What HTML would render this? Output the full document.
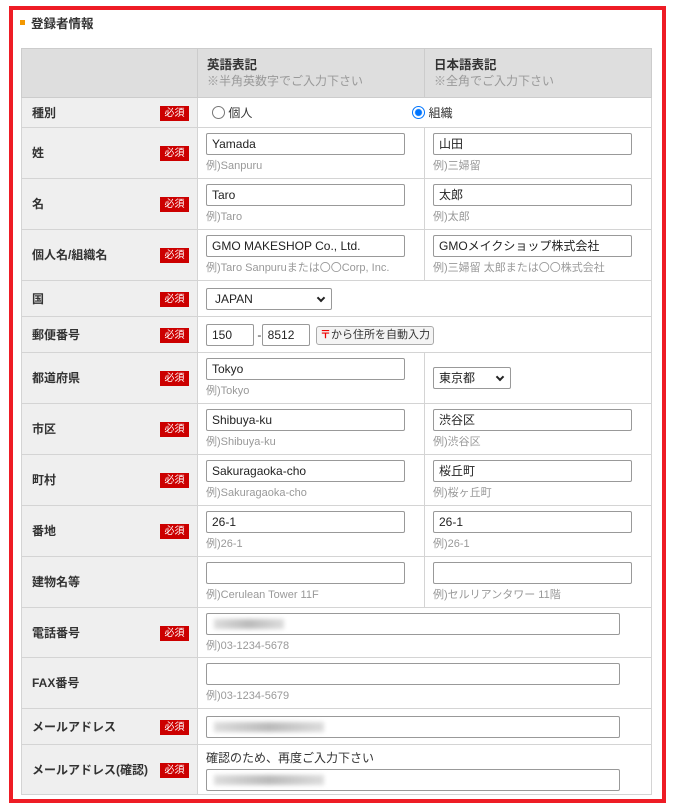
<!DOCTYPE html>
<html><head><meta charset="utf-8"><style>
*{box-sizing:border-box;margin:0;padding:0}
body{width:676px;height:809px;background:#fff;font-family:"Liberation Sans","Noto Sans CJK JP",sans-serif;font-size:12px;color:#333;position:relative;overflow:hidden}
.frame{position:absolute;left:9px;top:6px;width:657px;height:797px;border:4px solid #ee1c25}
.title{position:absolute;left:20px;top:13px;font-weight:bold;font-size:12.5px;color:#333}
.title:before{content:"";display:inline-block;width:5px;height:5px;background:#f39800;margin-right:6px;vertical-align:3px}
table{position:absolute;left:21px;top:48px;border-collapse:collapse;width:630px;table-layout:fixed}
td{border:1px solid #d4d4d4;vertical-align:middle;position:relative}
td.l{background:#efefef;font-weight:bold;padding-left:10px;font-size:12px;padding-bottom:1px}
th{background:#dedede;border:1px solid #ccc;text-align:left;font-weight:bold;padding-left:9px;vertical-align:top;padding-top:8px;font-size:12.5px;line-height:16px}
th small{display:block;font-weight:normal;color:#999;font-size:12px;margin-top:0}
.b{position:absolute;left:138px;top:50%;margin-top:-7px;width:29px;height:15px;background:#c00;color:#fff;font-size:10px;font-weight:normal;text-align:center;line-height:15px}
.i{display:block;width:199px;height:22px;border:1px solid #999;border-radius:2px;background:#fff;padding-left:5px;line-height:20px;font-size:12px;color:#222}
.w{width:414px}
.e{color:#999;font-size:11px;margin-top:2px}
td.f{padding-left:8px}
.bl{display:inline-block;width:110px;height:10px;margin:5px 0 0 2px;background:linear-gradient(90deg,#ddd,#bbb,#ddd);filter:blur(2px)}
.ar{position:absolute;right:7px;top:6px;width:6px;height:6px;border-right:2px solid #222;border-bottom:2px solid #222;transform:rotate(45deg)}
</style></head><body>
<div class="frame"></div>
<div class="title">登録者情報</div>
<table>
<colgroup><col style="width:176px"><col style="width:227px"><col style="width:227px"></colgroup>
<tr style="height:49px"><th></th><th>英語表記<small>※半角英数字でご入力下さい</small></th><th>日本語表記<small>※全角でご入力下さい</small></th></tr>
<tr style="height:30px"><td class="l">種別<span class="b">必須</span></td><td class="f" colspan="2" style="padding-left:14px"><span style="display:inline-block;width:13px;height:13px;border:1px solid #777;border-radius:50%;vertical-align:-2px"></span> 個人<span style="display:inline-block;width:160px"></span><span style="display:inline-block;width:13px;height:13px;border:1px solid #0075ff;border-radius:50%;vertical-align:-2px;background:radial-gradient(#0075ff 3px,#fff 4px)"></span> 組織</td></tr>
<tr style="height:51px"><td class="l">姓<span class="b">必須</span></td><td class="f"><span class="i">Yamada</span><div class="e">例)Sanpuru</div></td><td class="f"><span class="i">山田</span><div class="e">例)三婦留</div></td></tr>
<tr style="height:51px"><td class="l">名<span class="b">必須</span></td><td class="f"><span class="i">Taro</span><div class="e">例)Taro</div></td><td class="f"><span class="i">太郎</span><div class="e">例)太郎</div></td></tr>
<tr style="height:51px"><td class="l">個人名/組織名<span class="b">必須</span></td><td class="f"><span class="i">GMO MAKESHOP Co., Ltd.</span><div class="e">例)Taro Sanpuruまたは〇〇Corp, Inc.</div></td><td class="f"><span class="i">GMOメイクショップ株式会社</span><div class="e">例)三婦留 太郎または〇〇株式会社</div></td></tr>
<tr style="height:36px"><td class="l">国<span class="b">必須</span></td><td class="f" colspan="2"><span class="i" style="width:126px;padding-left:8px;position:relative">JAPAN<span class="ar"></span></span></td></tr>
<tr style="height:36px"><td class="l">郵便番号<span class="b">必須</span></td><td class="f" colspan="2"><span class="i" style="display:inline-block;width:48px">150</span> - <span class="i" style="display:inline-block;width:48px;margin-left:-3px">8512</span> <span style="display:inline-block;border:1px solid #aaa;border-radius:3px;background:#f4f4f4;height:19px;line-height:17px;padding:0 3px;font-size:11px;vertical-align:1px;margin-left:3px"><b style="color:#e00">〒</b>から住所を自動入力</span></td></tr>
<tr style="height:51px"><td class="l">都道府県<span class="b">必須</span></td><td class="f"><span class="i">Tokyo</span><div class="e">例)Tokyo</div></td><td class="f"><span class="i" style="width:78px;position:relative">東京都<span class="ar"></span></span></td></tr>
<tr style="height:51px"><td class="l">市区<span class="b">必須</span></td><td class="f"><span class="i">Shibuya-ku</span><div class="e">例)Shibuya-ku</div></td><td class="f"><span class="i">渋谷区</span><div class="e">例)渋谷区</div></td></tr>
<tr style="height:51px"><td class="l">町村<span class="b">必須</span></td><td class="f"><span class="i">Sakuragaoka-cho</span><div class="e">例)Sakuragaoka-cho</div></td><td class="f"><span class="i">桜丘町</span><div class="e">例)桜ヶ丘町</div></td></tr>
<tr style="height:51px"><td class="l">番地<span class="b">必須</span></td><td class="f"><span class="i">26-1</span><div class="e">例)26-1</div></td><td class="f"><span class="i">26-1</span><div class="e">例)26-1</div></td></tr>
<tr style="height:51px"><td class="l">建物名等</td><td class="f"><span class="i"></span><div class="e">例)Cerulean Tower 11F</div></td><td class="f"><span class="i"></span><div class="e">例)セルリアンタワー 11階</div></td></tr>
<tr style="height:50px"><td class="l">電話番号<span class="b">必須</span></td><td class="f" colspan="2"><span class="i w"><span class="bl" style="width:70px"></span></span><div class="e">例)03-1234-5678</div></td></tr>
<tr style="height:51px"><td class="l">FAX番号</td><td class="f" colspan="2"><span class="i w"></span><div class="e">例)03-1234-5679</div></td></tr>
<tr style="height:36px"><td class="l">メールアドレス<span class="b">必須</span></td><td class="f" colspan="2"><span class="i w"><span class="bl"></span></span></td></tr>
<tr style="height:50px"><td class="l">メールアドレス(確認)<span class="b">必須</span></td><td class="f" colspan="2"><div style="margin-bottom:3px">確認のため、再度ご入力下さい</div><span class="i w"><span class="bl"></span></span></td></tr>
</table>
</body></html>
